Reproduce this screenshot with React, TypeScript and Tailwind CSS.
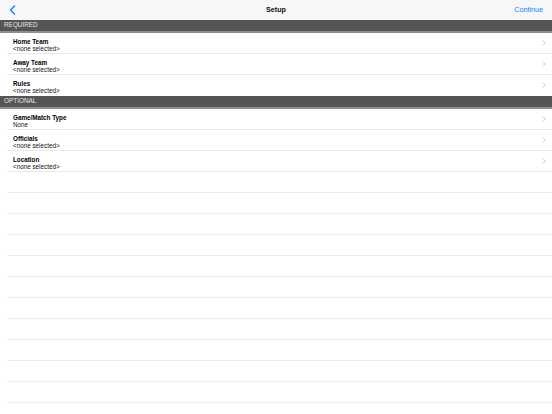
import React from 'react';

type Item = { title: string; value: string };

const required: Item[] = [
  { title: 'Home Team', value: '<none selected>' },
  { title: 'Away Team', value: '<none selected>' },
  { title: 'Rules', value: '<none selected>' },
];

const optional: Item[] = [
  { title: 'Game/Match Type', value: 'None' },
  { title: 'Officials', value: '<none selected>' },
  { title: 'Location', value: '<none selected>' },
];

function SectionHeader({ label }: { label: string }) {
  return (
    <div className="h-[13px] shrink-0 bg-[#555555] border-b-2 border-[#8e8e8e] flex items-center px-[4px]">
      <span className="text-[6.4px] leading-none text-[#e6e6e6]">{label}</span>
    </div>
  );
}

function Row({ item, last }: { item: Item; last?: boolean }) {
  return (
    <div className="h-[21px] shrink-0 flex pl-[7px]">
      <div className={`flex-1 flex items-start ${last ? '' : 'border-b border-[#e9e9ea]'}`}>
        <div className="flex-1 pl-[6px] pt-[5px] leading-[7.4px]">
          <div className="text-[6.3px] font-bold text-black">{item.title}</div>
          <div className="text-[6.3px] text-[#111111]">{item.value}</div>
        </div>
        <svg width="4" height="6" viewBox="0 0 4 6" className="mr-[6px] mt-[7px]">
          <path d="M0.8 0.6 L3.2 3 L0.8 5.4" fill="none" stroke="#c4c4c8" strokeWidth="0.9" />
        </svg>
      </div>
    </div>
  );
}

function EmptyRow() {
  return (
    <div className="h-[21px] pl-[7px] shrink-0">
      <div className="h-full border-b border-[#ececed]" />
    </div>
  );
}

export default function App() {
  return (
    <div
      className="w-[552px] h-[414px] overflow-hidden bg-white flex flex-col"
      style={{ fontFamily: '"Liberation Sans", Arial, sans-serif' }}
    >
      {/* Nav bar */}
      <div className="h-[20px] bg-[#f7f7f7] flex items-center px-[9px] shrink-0">
        <div className="w-[60px] flex items-center">
          <svg width="7" height="10" viewBox="0 0 7 10">
            <path d="M5.5 1 L1.5 5 L5.5 9" fill="none" stroke="#157efb" strokeWidth="1.4" strokeLinecap="round" strokeLinejoin="round" />
          </svg>
        </div>
        <div className="flex-1 text-center text-[7.2px] font-bold text-[#111111] pt-[1px]">Setup</div>
        <div className="w-[60px] text-right text-[7.2px] text-[#157efb] pt-[1px]">Continue</div>
      </div>

      <SectionHeader label="REQUIRED" />
      {required.map((item, i) => (
        <Row key={item.title} item={item} last={i === required.length - 1} />
      ))}

      <SectionHeader label="OPTIONAL" />
      {optional.map((item) => (
        <Row key={item.title} item={item} />
      ))}

      {Array.from({ length: 12 }).map((_, i) => (
        <EmptyRow key={i} />
      ))}
    </div>
  );
}
